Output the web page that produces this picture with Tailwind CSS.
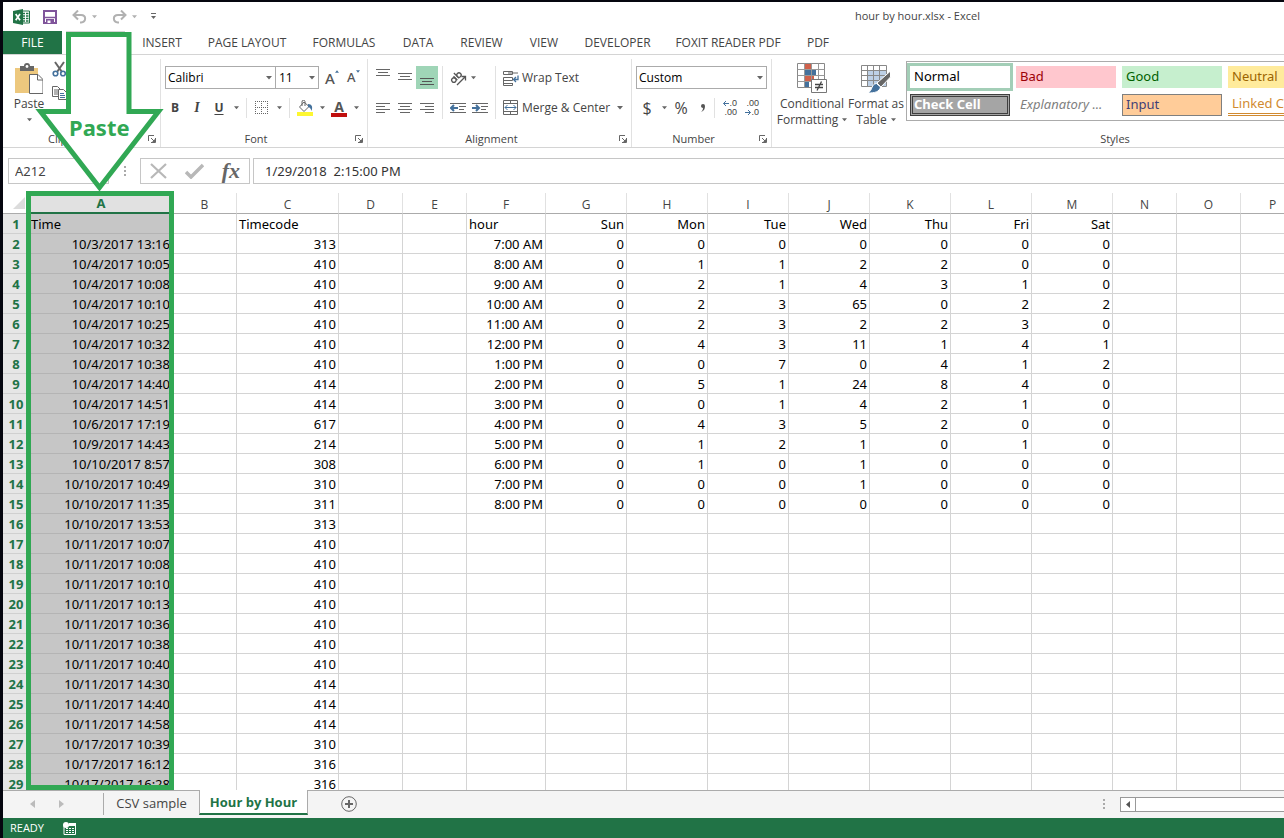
<!DOCTYPE html>
<html lang="en">
<head>
  <meta charset="UTF-8" />
  <meta name="viewport" content="width=device-width, initial-scale=1.0"/>
  <title>hour by hour.xlsx - Excel</title>
  <script src="https://cdn.jsdelivr.net/npm/@tailwindcss/browser@4"></script>
</head>
<body class="h-screen overflow-hidden bg-[#05060f] pt-[2px] pl-[3px] font-['Open_Sans','Noto_Sans',sans-serif] text-xs text-[#444]">
  <svg class="hidden">
    <symbol id="caret" viewBox="0 0 6 4"><path d="M0 0h6L3 3.5z" fill="#666"/></symbol>
    <symbol id="launcher" viewBox="0 0 8 8"><path d="M.5 6V.5H6M3 3l3 3M7.500 3v4.500H3" fill="none" stroke="#666"/><path d="M7 4v3H4z" fill="#666"/></symbol>
  </svg>

  <div class="relative flex h-full flex-col overflow-hidden bg-white">

    <!-- Title bar -->
    <header class="flex h-[29px] shrink-0 items-center pl-[10px]">
      <svg class="h-4 w-[17px]" viewBox="0 0 17 16">
        <path d="M9 2h7.500v12H9z" fill="#fff" stroke="#217346"/>
        <path d="M10 4.500h2m1 0h2.500M10 7h2m1 0h2.500M10 9.500h2m1 0h2.500M10 12h2m1 0h2.500" stroke="#217346" stroke-width="1.500"/>
        <path d="M0 2l10-2v16L0 14z" fill="#217346"/>
        <path d="M2.700 5l4.300 6.200M7 5l-4.300 6.200" stroke="#fff" stroke-width="1.700"/>
      </svg>
      <button class="ml-[13px]" aria-label="Save">
        <svg class="h-[14px] w-[14px]" viewBox="0 0 14 14"><path d="M1 1h12v12H1z" fill="#fff" stroke="#80559b" stroke-width="2"/><path d="M2 7.500h10" stroke="#80559b" stroke-width="1.500"/><path d="M3 9h8v5H3z" fill="#80559b"/><path d="M4.500 10.500h3V13h-3z" fill="#fff"/></svg>
      </button>
      <button class="ml-[15px] flex items-center gap-[5px]" aria-label="Undo">
        <svg class="h-[14px] w-[15px]" viewBox="0 0 15 14" fill="none" stroke="#b1b1b1" stroke-width="2"><path d="M6 .5L1.500 5 6 9.500M2 5h7c5.500 0 5.500 7 0 7.500H8"/></svg>
        <svg class="h-1 w-[5px]" viewBox="0 0 6 4"><path d="M0 0h6L3 3.500z" fill="#b1b1b1"/></svg>
      </button>
      <button class="ml-[15px] flex items-center gap-[5px]" aria-label="Redo">
        <svg class="h-[14px] w-[15px]" viewBox="0 0 15 14" fill="none" stroke="#b1b1b1" stroke-width="2"><path d="M9 .5L13.500 5 9 9.500M13 5H6C.5 5 .5 12 6 12.500h1"/></svg>
        <svg class="h-1 w-[5px]" viewBox="0 0 6 4"><path d="M0 0h6L3 3.500z" fill="#b1b1b1"/></svg>
      </button>
      <button class="ml-[14px]" aria-label="Customize Quick Access Toolbar">
        <svg class="h-[7px] w-[5px]" viewBox="0 0 5 7"><path d="M0 .5h5" stroke="#666"/><path d="M0 3h5L2.500 6z" fill="#666"/></svg>
      </button>
      <h1 class="ml-[699px] text-[11px] whitespace-nowrap">hour by hour.xlsx - Excel</h1>
    </header>

    <!-- Ribbon tabs -->
    <nav class="flex h-6 shrink-0 border-b border-[#d4d4d4] whitespace-nowrap">
      <button class="w-[59px] bg-[#217346] text-white">FILE</button>
      <button class="mx-1 -mb-px w-[59px] border border-b-0 border-[#d4d4d4] bg-white text-[#217346]">HOME</button>
      <button class="w-[66px]">INSERT</button>
      <button class="w-[104px]">PAGE LAYOUT</button>
      <button class="w-[90px]">FORMULAS</button>
      <button class="w-[58px]">DATA</button>
      <button class="w-[69px]">REVIEW</button>
      <button class="w-[56px]">VIEW</button>
      <button class="w-[91px]">DEVELOPER</button>
      <button class="w-[130px]">FOXIT READER PDF</button>
      <button class="w-[50px]">PDF</button>
    </nav>

    <!-- Ribbon -->
    <div class="flex h-[93px] shrink-0 overflow-hidden border-b border-[#d4d4d4] pt-1 whitespace-nowrap">

      <section class="flex w-[158px] shrink-0 flex-col border-r border-[#e1e1e1]">
        <div class="flex flex-1 gap-[6px] pl-[9px]">
          <button class="flex w-[34px] flex-col items-center pt-1">
            <svg class="h-8 w-7" viewBox="0 0 28 32">
              <path d="M0 5h23v25H0z" fill="#edc87e"/><path d="M5 3h4a3 3 0 0 1 6 0h4v5H5z" fill="#666"/><circle cx="12" cy="3.500" r="1.400" fill="#fff"/>
              <path d="M14.500 11.500h8.500l5 5V30.500H14.500z" fill="#fff" stroke="#666"/><path d="M22.500 11.500v5.500H28" fill="none" stroke="#666"/>
            </svg>
            <span class="mt-px leading-4">Paste</span>
            <svg class="mt-[6px] h-1 w-[5px]"><use href="#caret"/></svg>
          </button>
          <div class="flex flex-col gap-2 pt-[2px]">
            <button aria-label="Cut"><svg class="h-4 w-4" viewBox="0 0 16 16" fill="none" stroke-width="1.600"><path d="M3 1l7 10M12 1L5 11" stroke="#666" stroke-width="2"/><circle cx="3.500" cy="12.500" r="2.300" stroke="#44719c"/><circle cx="11" cy="12.500" r="2.300" stroke="#44719c"/></svg></button>
            <button aria-label="Copy"><svg class="h-4 w-4" viewBox="0 0 16 16" fill="#fff" stroke="#666"><path d="M.5 1.500h5l3 3v7h-8z"/><path d="M2 5h4M2 7h4M2 9h4"/><path d="M6.500 4.500h5l3 3v7h-8z"/><path d="M8 8.500h4M8 10.500h5M8 12.500h5" stroke="#44719c"/></svg></button>
          </div>
        </div>
        <div class="flex h-4 items-center justify-between pr-1 pl-[45px] text-[11px]">
          <span>Clipboard</span>
          <button aria-label="Clipboard settings"><svg class="h-2 w-2"><use href="#launcher"/></svg></button>
        </div>
      </section>

      <section class="flex w-[207px] shrink-0 flex-col border-r border-[#e1e1e1]">
        <div class="flex flex-1 flex-col gap-2 pt-[7px]">
          <div class="flex h-[23px] items-center pl-1">
            <label class="relative h-full">
              <select aria-label="Font" class="h-full w-[111px] appearance-none border border-[#ababab] bg-white pl-[2px] text-black"><option>Calibri</option></select>
              <svg class="absolute top-[10px] right-1 h-1 w-[6px]"><use href="#caret"/></svg>
            </label>
            <label class="relative h-full">
              <select aria-label="Font size" class="h-full w-[43px] appearance-none border border-l-0 border-[#ababab] bg-white pl-[3px] text-black"><option>11</option></select>
              <svg class="absolute top-[10px] right-1 h-1 w-[6px]"><use href="#caret"/></svg>
            </label>
            <button aria-label="Increase font size" class="ml-[6px] flex w-[18px] items-center"><b class="font-['Noto_Sans'] text-[15px] font-medium text-[#555]">A</b><svg class="mb-3 h-[3px] w-1" viewBox="0 0 6 4"><path d="M0 4h6L3 0z" fill="#44719c"/></svg></button>
            <button aria-label="Decrease font size" class="ml-[4px] flex w-[18px] items-center"><b class="font-['Noto_Sans'] text-[13px] font-medium text-[#555]">A</b><svg class="mb-3 h-[3px] w-1" viewBox="0 0 6 4"><path d="M0 0h6L3 4z" fill="#44719c"/></svg></button>
          </div>
          <div class="flex h-[22px] items-center pl-[3px]">
            <button class="w-[22px] font-bold">B</button>
            <button class="w-[22px] font-['Liberation_Serif'] text-sm font-bold italic">I</button>
            <button class="w-[22px] font-bold underline underline-offset-2">U</button>
            <button class="flex w-3 justify-center" aria-label="Underline options"><svg class="h-1 w-[5px]"><use href="#caret"/></svg></button>
            <span class="mx-1 h-5 border-l border-[#e1e1e1]"></span>
            <button class="flex w-[22px] justify-center" aria-label="Borders"><svg class="h-[14px] w-[14px]" viewBox="0 0 14 14"><path d="M.5 0v13M6.500 0v13M12.500 0v13M0 .5h13M0 6.500h13M0 12.500h13" stroke="#666" stroke-dasharray="1 1"/></svg></button>
            <button class="flex w-3 justify-center" aria-label="Border options"><svg class="h-1 w-[5px]"><use href="#caret"/></svg></button>
            <span class="mx-1 h-5 border-l border-[#e1e1e1]"></span>
            <button class="flex w-[22px] justify-center" aria-label="Fill color"><svg class="h-4 w-4" viewBox="0 0 16 16"><path d="M7 2l5 4.500-5 5L2.500 7z" fill="#fff" stroke="#666"/><path d="M5 6V2a1.500 1.500 0 0 1 3-.5V6" fill="none" stroke="#666"/><path d="M11 4c4 0 5 3 3.500 7-1-3-2-4-3.500-4z" fill="#44719c"/><path d="M0 12h16v4H0z" fill="#fdf731"/></svg></button>
            <button class="flex w-3 justify-center" aria-label="Fill options"><svg class="h-1 w-[5px]"><use href="#caret"/></svg></button>
            <button class="flex w-[22px] flex-col items-center" aria-label="Font color"><b class="h-[13px] text-sm leading-[13px] text-[#555]">A</b><span class="h-1 w-4 bg-[#c00f0f]"></span></button>
            <button class="flex w-3 justify-center" aria-label="Font color options"><svg class="h-1 w-[5px]"><use href="#caret"/></svg></button>
          </div>
        </div>
        <div class="flex h-4 items-center pr-1">
          <span class="flex-1 pr-4 pl-3 text-center text-[11px]">Font</span>
          <button aria-label="Font settings"><svg class="h-2 w-2"><use href="#launcher"/></svg></button>
        </div>
      </section>

      <section class="flex w-[264px] shrink-0 flex-col border-r border-[#e1e1e1]">
        <div class="flex flex-1 pt-[7px] pl-1">
          <div class="flex flex-col gap-2">
            <div class="flex h-[23px]">
              <button class="flex w-[22px] justify-center pt-[3px]" aria-label="Top align"><svg class="h-2 w-[14px]" viewBox="0 0 14 8" stroke="#666"><path d="M0 .5h14M2 3.500h10M0 6.500h14"/></svg></button>
              <button class="flex w-[22px] justify-center pt-[7px]" aria-label="Middle align"><svg class="h-2 w-[14px]" viewBox="0 0 14 8" stroke="#666"><path d="M0 .5h14M2 3.500h10M0 6.500h14"/></svg></button>
              <button class="flex w-[22px] justify-center bg-[#9fd5b7] pt-3" aria-label="Bottom align"><svg class="h-2 w-[14px]" viewBox="0 0 14 8" stroke="#555"><path d="M0 .5h14M2 3.500h10M0 6.500h14"/></svg></button>
            </div>
            <div class="flex h-[22px] items-center">
              <button class="flex w-[22px] justify-center" aria-label="Align left"><svg class="h-[11px] w-[14px]" viewBox="0 0 14 11" stroke="#666"><path d="M0 .5h14M0 3.500h9M0 6.500h14M0 9.500h9"/></svg></button>
              <button class="flex w-[22px] justify-center" aria-label="Center"><svg class="h-[11px] w-[14px]" viewBox="0 0 14 11" stroke="#666"><path d="M0 .5h14M2 3.500h10M0 6.500h14M2 9.500h10"/></svg></button>
              <button class="flex w-[22px] justify-center" aria-label="Align right"><svg class="h-[11px] w-[14px]" viewBox="0 0 14 11" stroke="#666"><path d="M0 .5h14M5 3.500h9M0 6.500h14M5 9.500h9"/></svg></button>
            </div>
          </div>
          <span class="mx-1 h-[53px] border-l border-[#e1e1e1]"></span>
          <div class="flex flex-col gap-2">
            <button class="flex h-[23px] items-center gap-1 pl-[3px]" aria-label="Orientation">
              <svg class="h-4 w-[17px]" viewBox="0 0 17 16" fill="none" stroke="#555" stroke-width="1.300"><g transform="rotate(-45 6 8)"><circle cx="3" cy="8" r="2.200"/><path d="M5.500 5v5.500M8 3v7.500"/><circle cx="10.200" cy="8" r="2.200"/></g><path d="M7 15l8-8M11.500 6.500H15.500V10.500"/></svg>
              <svg class="h-1 w-[5px]"><use href="#caret"/></svg>
            </button>
            <div class="flex h-[22px] items-center">
              <button class="flex w-[22px] justify-center" aria-label="Decrease indent"><svg class="h-[11px] w-4" viewBox="0 0 16 11"><path d="M0 .5h16M9 3.500h7M9 6.500h5M0 9.500h16" stroke="#666"/><path d="M1 5h7M4 2L1 5l3 3" fill="none" stroke="#44719c" stroke-width="2"/></svg></button>
              <button class="flex w-[22px] justify-center" aria-label="Increase indent"><svg class="h-[11px] w-4" viewBox="0 0 16 11"><path d="M0 .5h16M9 3.500h7M9 6.500h5M0 9.500h16" stroke="#666"/><path d="M0 5h7M4 2l3 3-3 3" fill="none" stroke="#44719c" stroke-width="2"/></svg></button>
            </div>
          </div>
          <span class="mx-1 h-[53px] border-l border-[#e1e1e1]"></span>
          <div class="flex flex-col gap-2 pl-[3px]">
            <button class="flex h-[23px] items-center gap-[3px]">
              <svg class="h-4 w-4" viewBox="0 0 16 16" fill="none" stroke="#666"><path d="M.5 1.500h9v3h-9zM5 3h10M.5 7.500h9v3h-9zM.5 13.500h9M.5 10v5.500h9V13"/><path d="M15 5.500v4h-4M13 7l-2.500 2.500L13 12" stroke="#44719c" stroke-width="1.300"/></svg>
              Wrap Text
            </button>
            <button class="flex h-[22px] items-center gap-[3px]">
              <svg class="h-4 w-4" viewBox="0 0 16 16" fill="none" stroke="#666"><path d="M.5.5h14v14H.5zM.5 3.500h14M.5 11.500h14M7.500.5v3M7.500 11.500v3"/><path d="M2 7.500h11M4.500 5L2 7.500 4.500 10M10.500 5L13 7.500 10.500 10" stroke="#44719c"/></svg>
              Merge &amp; Center
              <svg class="ml-1 h-1 w-[6px]"><use href="#caret"/></svg>
            </button>
          </div>
        </div>
        <div class="flex h-4 items-center pr-1">
          <span class="flex-1 pr-1 text-center text-[11px]">Alignment</span>
          <button aria-label="Alignment settings"><svg class="h-2 w-2"><use href="#launcher"/></svg></button>
        </div>
      </section>

      <section class="flex w-[140px] shrink-0 flex-col border-r border-[#e1e1e1]">
        <div class="flex flex-1 flex-col gap-2 pt-[7px] pl-1">
          <label class="relative h-[23px] w-[131px]">
            <select aria-label="Number format" class="h-full w-full appearance-none border border-[#ababab] bg-white pl-[2px] text-black"><option>Custom</option></select>
            <svg class="absolute top-[10px] right-1 h-1 w-[6px]"><use href="#caret"/></svg>
          </label>
          <div class="flex h-[22px] items-center">
            <button class="w-[22px] text-base">$</button>
            <button class="flex w-3 justify-center" aria-label="Currency options"><svg class="h-1 w-[5px]"><use href="#caret"/></svg></button>
            <button class="w-[22px] text-base">%</button>
            <button class="flex w-[22px] justify-center" aria-label="Comma style"><svg class="h-2 w-[6px]" viewBox="0 0 6 8"><path d="M1 2a2 2 0 1 1 4 0c0 3-1 5-4 6 1-1 2-2 2-4-1 0-2-1-2-2z" fill="#555"/></svg></button>
            <span class="h-5 border-l border-[#e1e1e1]"></span>
            <button class="flex w-[22px] flex-col items-end font-['Liberation_Sans'] text-[9px] leading-[9px]" aria-label="Increase decimal"><span class="flex items-center"><svg class="h-[5px] w-[6px]" viewBox="0 0 6 5" fill="none" stroke="#44719c"><path d="M.5 2.500H6M3 0L.5 2.500 3 5"/></svg>.0</span><span>.00</span></button>
            <button class="flex w-[22px] flex-col items-end font-['Liberation_Sans'] text-[9px] leading-[9px]" aria-label="Decrease decimal"><span>.00</span><span class="flex items-center"><svg class="h-[5px] w-[6px]" viewBox="0 0 6 5" fill="none" stroke="#44719c"><path d="M0 2.500h5.500M3 0l2.500 2.500L3 5"/></svg>.0</span></button>
          </div>
        </div>
        <div class="flex h-4 items-center pr-1">
          <span class="flex-1 pr-1 text-center text-[11px]">Number</span>
          <button aria-label="Number settings"><svg class="h-2 w-2"><use href="#launcher"/></svg></button>
        </div>
      </section>

      <section class="flex w-[686px] shrink-0 flex-col">
        <div class="flex flex-1">
          <button class="ml-[5px] flex w-[70px] flex-col items-center pt-1">
            <svg class="h-[31px] w-[30px]" viewBox="0 0 30 31">
              <path d="M.5.500h27v24H.5z" fill="#fff" stroke="#888"/>
              <path d="M8 1h6v5H8z" fill="#d0604a"/><path d="M8 7h11v5H8z" fill="#44719c"/><path d="M8 13h9v5H8z" fill="#d0604a"/><path d="M8 19h4v5H8z" fill="#44719c"/>
              <path d="M.5 6.500h27M.5 12.500h27M.5 18.500h27M7.500.5v24M14.500.5v24M21.500.5v24" stroke="#999"/>
              <path d="M14.500 16.500h15v13h-15z" fill="#fff" stroke="#777"/><path d="M18 21.500h8M18 24.500h8M24.500 18.500l-4.500 9" stroke="#444" stroke-width="1.300"/>
            </svg>
            <span class="mt-[2px] leading-4">Conditional</span>
            <span class="flex items-center gap-1 leading-4">Formatting <svg class="h-1 w-[5px]"><use href="#caret"/></svg></span>
          </button>
          <button class="ml-[2px] flex w-[54px] flex-col items-center pt-1">
            <svg class="h-[31px] w-[30px]" viewBox="0 0 30 31">
              <path d="M.5 2.500h25v21H.5z" fill="#fff"/><path d="M6 8h19v15H6z" fill="#bdd0e6"/>
              <path d="M.5 2.500h25v21H.5zM.5 7.500h25M.5 12.500h25M.5 17.500h25M6.500 2.500v21M12.500 2.500v21M18.500 2.500v21" fill="none" stroke="#888"/>
              <path d="M29.500 8v6L20 24l-4-4z" fill="#666" stroke="#fff"/><path d="M15.500 20.500l4 3.500c-1 5-6 6-12.500 6 5-3 3-9 8.500-9.500z" fill="#44719c" stroke="#fff"/>
            </svg>
            <span class="mt-[2px] leading-4">Format as</span>
            <span class="flex items-center gap-1 leading-4">Table <svg class="h-1 w-[5px]"><use href="#caret"/></svg></span>
          </button>
          <div class="mt-[2px] ml-[3px] grid h-[60px] w-[540px] grid-cols-[repeat(5,100px)] content-start gap-[6px] border border-[#ababab] p-[3px] pt-1 font-['Noto_Sans'] text-[13px] text-black">
            <button class="h-[22px] bg-white pl-1 text-left outline-3 outline-[#a3ceb7]">Normal</button>
            <button class="h-[22px] bg-[#ffc7ce] pl-1 text-left text-[#9c0006]">Bad</button>
            <button class="h-[22px] bg-[#c6efce] pl-1 text-left text-[#006100]">Good</button>
            <button class="h-[22px] bg-[#ffeb9c] pl-1 text-left text-[#9c6500]">Neutral</button>
            <button class="h-[22px] bg-[#f2f2f2] pl-1 text-left">Calculation</button>
            <button class="flex h-[22px] items-center border-3 border-double border-[#3f3f3f] bg-[#a5a5a5] pl-px font-bold text-white">Check Cell</button>
            <button class="h-[22px] pl-1 text-left text-[#7f7f7f] italic">Explanatory ...</button>
            <button class="flex h-[22px] items-center border border-[#7f7f7f] bg-[#ffcc99] pl-[3px] text-[#3f3f76]">Input</button>
            <button class="flex h-[22px] items-center border-b-3 border-double border-[#d18a30] pl-1 text-[#d18a30]">Linked Cell</button>
            <button class="h-[22px] pl-1 text-left">Note</button>
          </div>
        </div>
        <span class="h-4 text-center text-[11px] leading-4">Styles</span>
      </section>
    </div>

    <!-- Formula bar -->
    <div class="flex h-[45px] shrink-0 items-start bg-white pt-[10px] pl-[5px] text-[13px]">
      <input aria-label="Name box" value="A212" class="h-[26px] w-[101px] border border-[#c6c6c6] pl-[6px] font-['Noto_Sans'] text-[#444]"/>
      <svg class="mx-[14px] h-[26px] w-[3px]" viewBox="0 0 3 26"><path d="M1 8h2v2H1zM1 12h2v2H1zM1 16h2v2H1z" fill="#aaa"/></svg>
      <div class="flex h-[26px] w-[110px] items-center justify-between border border-[#c6c6c6] px-[9px]">
        <button aria-label="Cancel"><svg class="h-4 w-[17px]" viewBox="0 0 17 16"><path d="M1 1l15 14M16 1L1 15" stroke="#b8b8b8" stroke-width="2.200"/></svg></button>
        <button aria-label="Enter"><svg class="h-4 w-[19px]" viewBox="0 0 19 16"><path d="M1 9l5 5L18 2" fill="none" stroke="#b8b8b8" stroke-width="3.500"/></svg></button>
        <button aria-label="Insert function" class="font-['Liberation_Serif'] text-[22px] leading-6 font-bold text-[#666] italic">fx</button>
      </div>
      <input aria-label="Formula" value="1/29/2018  2:15:00 PM" class="ml-[3px] h-[26px] min-w-0 flex-1 border border-r-0 border-[#c6c6c6] pl-[11px] font-['Noto_Sans'] text-[#333]"/>
    </div>

    <!-- Sheet -->
    <main class="min-h-0 flex-1 overflow-hidden">
      <table class="w-full min-w-[1302px] table-fixed border-separate border-spacing-0 font-['Noto_Sans'] text-[13px] leading-[17px] text-black">
        <colgroup>
          <col class="w-[26px]"/><col class="w-[144px]"/><col class="w-[64px]"/><col class="w-[102px]"/><col class="w-[64px]"/><col class="w-[64px]"/><col class="w-[79px]"/>
          <col class="w-[81px]"/><col class="w-[81px]"/><col class="w-[81px]"/><col class="w-[81px]"/><col class="w-[81px]"/><col class="w-[81px]"/><col class="w-[81px]"/>
          <col class="w-[64px]"/><col class="w-[64px]"/><col/>
        </colgroup>
        <thead><tr id="letters"></tr></thead>
        <tbody id="cells"></tbody>
      </table>
    </main>

    <!-- Sheet tabs -->
    <div class="flex h-[28px] shrink-0 items-start border-t border-[#ababab] bg-[#f4f4f4] text-[13px]">
      <button class="mt-[9px] ml-[27px]" aria-label="Previous sheet"><svg class="h-2 w-[5px]" viewBox="0 0 5 8"><path d="M5 0v8L0 4z" fill="#bbb"/></svg></button>
      <button class="mt-[9px] ml-6" aria-label="Next sheet"><svg class="h-2 w-[5px]" viewBox="0 0 5 8"><path d="M0 0v8l5-4z" fill="#bbb"/></svg></button>
      <button class="mt-[2px] ml-[39px] h-[22px] w-[96px] border-l border-[#ababab]">CSV sample</button>
      <button class="-mt-px h-[25px] w-[109px] border-x border-b-2 border-x-[#ababab] border-b-[#217346] bg-white pt-[3px] font-bold text-[#217346]">Hour by Hour</button>
      <button class="mt-[5px] ml-[33px]" aria-label="New sheet"><svg class="h-4 w-4" viewBox="0 0 16 16" fill="none" stroke="#666"><circle cx="8" cy="8" r="7.300"/><path d="M8 4v8M4 8h8" stroke-width="2"/></svg></button>
      <svg class="mt-2 ml-auto h-[11px] w-[2px]" viewBox="0 0 2 11"><path d="M0 0h2v2H0zM0 4h2v2H0zM0 8h2v2H0z" fill="#aaa"/></svg>
      <div class="mt-[6px] ml-[15px] flex h-[15px] w-[164px] border border-r-0 border-[#999] bg-white">
        <button class="flex w-[15px] items-center justify-center border-r border-[#999]" aria-label="Scroll left"><svg class="h-[7px] w-1" viewBox="0 0 4 7"><path d="M4 0v7L0 3.500z" fill="#555"/></svg></button>
      </div>
    </div>

    <!-- Status bar -->
    <footer class="flex h-5 shrink-0 items-center gap-[19px] bg-[#217346] pt-px pl-[7px] text-[11px] text-white">
      <span>READY</span>
      <svg class="h-[13px] w-[13px]" viewBox="0 0 13 13"><path d="M1 3.500h11.500v9H1z" fill="none" stroke="#fff"/><path d="M6 1h7v3H6z" fill="#fff"/><circle cx="3" cy="3" r="3" fill="#fff"/><path d="M3 6.500h2m1 0h2m1 0h2M3 8.500h2m1 0h2m1 0h2M3 10.500h2m1 0h2m1 0h2" stroke="#fff"/></svg>
    </footer>

    <!-- Paste callout, drawn over the ribbon and column A -->
    <svg class="pointer-events-none absolute top-[30px] left-[23px] h-[758px] w-[148px]" viewBox="0 0 148 758" fill="none" stroke="#31a854" stroke-width="5">
      <path d="M42.500 2.500h60.500v77h29.500L73.500 155.500 14.500 79.500h28z" fill="#fff"/>
      <path d="M2.500 161.500h143v594h-143z"/>
    </svg>
    <span class="absolute top-[111px] left-[66px] font-['Noto_Sans'] text-[22px] leading-7 font-bold text-[#31a854]">Paste</span>
  </div>

  <script>
    const times = [
      "10/3/2017 13:16", "10/4/2017 10:05", "10/4/2017 10:08", "10/4/2017 10:10", "10/4/2017 10:25", "10/4/2017 10:32",
      "10/4/2017 10:38", "10/4/2017 14:40", "10/4/2017 14:51", "10/6/2017 17:19", "10/9/2017 14:43", "10/10/2017 8:57",
      "10/10/2017 10:49", "10/10/2017 11:35", "10/10/2017 13:53", "10/11/2017 10:07", "10/11/2017 10:08", "10/11/2017 10:10",
      "10/11/2017 10:13", "10/11/2017 10:36", "10/11/2017 10:38", "10/11/2017 10:40", "10/11/2017 14:30", "10/11/2017 14:40",
      "10/11/2017 14:58", "10/17/2017 10:39", "10/17/2017 16:12", "10/17/2017 16:28"
    ];
    const codes = [313, 410, 410, 410, 410, 410, 410, 414, 414, 617, 214, 308, 310, 311, 313, 410, 410, 410, 410, 410, 410, 410, 414, 414, 414, 310, 316, 316];
    const hours = [
      ["7:00 AM", 0, 0, 0, 0, 0, 0, 0],
      ["8:00 AM", 0, 1, 1, 2, 2, 0, 0],
      ["9:00 AM", 0, 2, 1, 4, 3, 1, 0],
      ["10:00 AM", 0, 2, 3, 65, 0, 2, 2],
      ["11:00 AM", 0, 2, 3, 2, 2, 3, 0],
      ["12:00 PM", 0, 4, 3, 11, 1, 4, 1],
      ["1:00 PM", 0, 0, 7, 0, 4, 1, 2],
      ["2:00 PM", 0, 5, 1, 24, 8, 4, 0],
      ["3:00 PM", 0, 0, 1, 4, 2, 1, 0],
      ["4:00 PM", 0, 4, 3, 5, 2, 0, 0],
      ["5:00 PM", 0, 1, 2, 1, 0, 1, 0],
      ["6:00 PM", 0, 1, 0, 1, 0, 0, 0],
      ["7:00 PM", 0, 0, 0, 1, 0, 0, 0],
      ["8:00 PM", 0, 0, 0, 0, 0, 0, 0]
    ];

    const letters = document.getElementById("letters");
    letters.innerHTML = '<th class="h-[21px] border-b border-[#ababab] p-0"><svg class="ml-auto mr-1 h-3 w-3" viewBox="0 0 12 12"><path d="M12 0v12H0z" fill="#dcdcdc"/></svg></th>' +
      [..."ABCDEFGHIJKLMNOP"].map((l) => l === "A"
        ? '<th class="h-[21px] border-b-2 border-[#217346] bg-[#e1e1e1] px-0 pt-[2px] pb-0 font-bold text-[#217346]">A</th>'
        : `<th class="h-[21px] border-r border-b border-r-[#e1e1e1] border-b-[#ababab] px-0 pt-[2px] pb-0 font-['Open_Sans'] text-xs leading-[17px] font-normal text-[#444]">${l}</th>`
      ).join("");

    let html = "";
    for (let r = 1; r <= 29; r++) {
      const row = Array(16).fill("");
      if (r === 1) {
        row[0] = "Time";
        row[2] = "Timecode";
        row.splice(5, 8, "hour", "Sun", "Mon", "Tue", "Wed", "Thu", "Fri", "Sat");
      } else {
        row[0] = times[r - 2];
        row[2] = codes[r - 2];
        if (hours[r - 2]) row.splice(5, 8, ...hours[r - 2]);
      }
      html += `<tr><th class="h-5 border-b border-[#d0d0d0] bg-[#e6e6e6] px-0 pt-[2px] pb-0 font-bold text-[#217346]">${r}</th>`;
      row.forEach((v, c) => {
        const align = r === 1 && [0, 2, 5].includes(c) ? "text-left" : "text-right";
        const fill = c === 0 ? "bg-[#c6c6c6] border-[#b4b4b4]" : "border-[#d4d4d4]";
        html += `<td class="h-5 overflow-hidden border-r border-b px-[2px] pt-[2px] pb-0 whitespace-nowrap ${align} ${fill}">${v}</td>`;
      });
      html += "</tr>";
    }
    document.getElementById("cells").innerHTML = html;
  </script>
</body>
</html>
